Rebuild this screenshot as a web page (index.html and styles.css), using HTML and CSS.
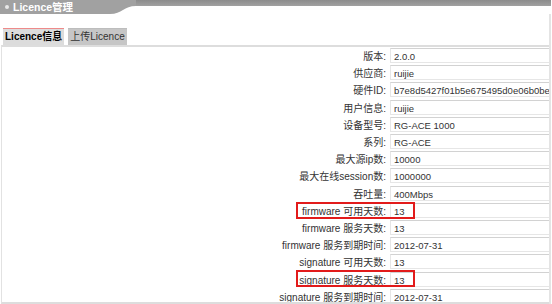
FILE: index.html
```html
<!DOCTYPE html>
<html lang="zh-CN">
<head>
    <meta charset="UTF-8">
    <meta name="viewport" content="width=device-width, initial-scale=1.0">
    <title>Licence管理</title>
    <link rel="stylesheet" href="styles.css">
</head>
<body>

    <div class="panel">
        <!-- Panel header -->
        <div class="panel-head">
            <div class="head-title"><span class="dot"></span>Licence管理</div>
            <svg class="head-curve" width="26" height="14" viewBox="0 0 26 14">
                <path d="M0 0 H26 V6 C14 6 12 14 0 14 Z" fill="#a1a1a1"/>
            </svg>
            <div class="head-strip"></div>
        </div>

        <div class="panel-body">
            <!-- Tabs -->
            <div class="tabs">
                <div class="tab active">Licence信息</div>
                <div class="tab">上传Licence</div>
            </div>

            <!-- Licence info -->
            <div class="info">
                <div class="row"><div class="label">版本:</div><div class="value">2.0.0</div></div>
                <div class="row"><div class="label">供应商:</div><div class="value">ruijie</div></div>
                <div class="row"><div class="label">硬件ID:</div><div class="value">b7e8d5427f01b5e675495d0e06b0be</div></div>
                <div class="row"><div class="label">用户信息:</div><div class="value">ruijie</div></div>
                <div class="row"><div class="label">设备型号:</div><div class="value">RG-ACE 1000</div></div>
                <div class="row"><div class="label">系列:</div><div class="value">RG-ACE</div></div>
                <div class="row"><div class="label">最大源ip数:</div><div class="value">10000</div></div>
                <div class="row"><div class="label">最大在线session数:</div><div class="value">1000000</div></div>
                <div class="row"><div class="label">吞吐量:</div><div class="value">400Mbps</div></div>
                <div class="row marked"><div class="label">firmware 可用天数:</div><div class="value">13</div><span class="mark"></span></div>
                <div class="row"><div class="label">firmware 服务天数:</div><div class="value">13</div></div>
                <div class="row"><div class="label">firmware 服务到期时间:</div><div class="value">2012-07-31</div></div>
                <div class="row"><div class="label">signature 可用天数:</div><div class="value">13</div></div>
                <div class="row marked"><div class="label">signature 服务天数:</div><div class="value">13</div><span class="mark"></span></div>
                <div class="row"><div class="label">signature 服务到期时间:</div><div class="value">2012-07-31</div></div>
            </div>
        </div>
    </div>

</body>
</html>
```

FILE: styles.css
```css
body {
    font-family: 'Liberation Sans', 'Noto Sans CJK SC', sans-serif;
    font-size: 10px;
    color: #333;
    background-color: #fff;
    margin: 0;
}
.panel {
    width: 551px;
    height: 304px;
    overflow: hidden;
}
.panel-head {
    display: flex;
    align-items: flex-start;
    height: 14px;
}
.head-title {
    width: 110px;
    height: 14px;
    background-color: #a1a1a1;
    color: #fff;
    font-weight: bold;
    font-size: 10.5px;
    line-height: 14px;
    display: flex;
    align-items: center;
    padding-left: 5px;
    box-sizing: border-box;
}
.dot {
    width: 4px;
    height: 4px;
    border-radius: 50%;
    background-color: #e8e8e8;
    margin-right: 4px;
}
.head-curve {
    flex-shrink: 0;
}
.head-strip {
    flex: 1;
    height: 6px;
    background: linear-gradient(#8c8c8c, #a1a1a1);
}
.panel-body {
    border-right: 2px solid #e4e4e4;
    padding-top: 14px;
    height: 290px;
    box-sizing: border-box;
}
.tabs {
    display: flex;
    gap: 4px;
    padding-left: 3px;
    height: 17px;
}
.tab {
    padding: 0 2px;
    line-height: 16px;
    background-color: #c6c6c6;
    border-top: 1px solid #bdbdbd;
    color: #333;
}
.tab.active {
    background-color: #dcdcdc;
    border-top-color: #ee8a8a;
    color: #000;
    font-weight: bold;
}
.info {
    margin-left: 1px;
    border-top: 2px solid #ddd;
    border-left: 1px solid #e2e2e2;
    border-bottom: 2px solid #ddd;
    height: 255px;
    overflow: hidden;
}
.row {
    display: grid;
    grid-template-columns: 384px 1fr;
    column-gap: 4px;
    align-items: center;
    height: 17.2px;
    position: relative;
}
.label {
    text-align: right;
}
.value {
    height: 15px;
    line-height: 15px;
    padding-left: 3px;
    font-size: 9.5px;
    border: 1px solid #e6e6e6;
    border-top-color: #d2d2d2;
    border-right: none;
    white-space: nowrap;
    overflow: hidden;
    box-sizing: border-box;
}
.mark {
    position: absolute;
    left: 294px;
    top: 0;
    width: 119px;
    height: 17px;
    border: 2px solid #e21b1b;
    box-sizing: border-box;
}
```
